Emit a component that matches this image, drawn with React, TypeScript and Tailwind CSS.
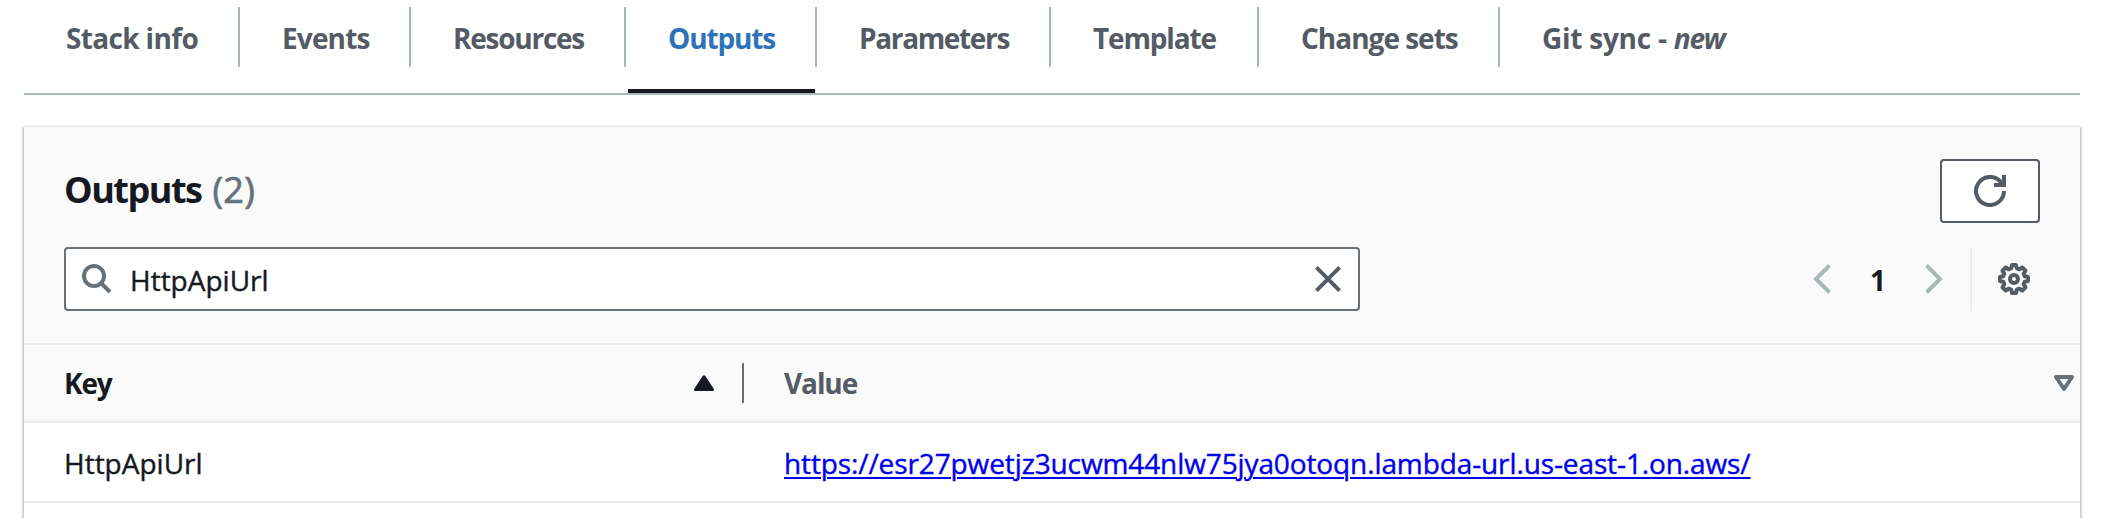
const tabs = [
  { label: "Stack info", cell: "w-[216px] pl-[42px]", text: "tracking-[-0.65px]" },
  { label: "Events", cell: "w-[171px] pl-[42px]", text: "tracking-[-0.85px]" },
  { label: "Resources", cell: "w-[215px] pl-[42px]", text: "tracking-[-1.25px]" },
  { label: "Outputs", cell: "w-[191px] pl-[42px]", text: "tracking-[-1.15px]", active: true },
  { label: "Parameters", cell: "w-[234px] pl-[42px]", text: "tracking-[-1.35px]" },
  { label: "Template", cell: "w-[208px] pl-[42px]", text: "tracking-[-1.15px]" },
  { label: "Change sets", cell: "w-[241px] pl-[42px]", text: "tracking-[-1px]" },
];

function Tabs() {
  return (
    <nav className="flex h-[88px] border-b-2 border-[#aab7b8] font-bold text-[#545b64]">
      {tabs.map((tab) => (
        <a key={tab.label} className={"relative h-[60px] shrink-0 border-r-2 border-[#aab7b8] leading-[62px] " + tab.cell}>
          <span className={(tab.active ? "text-[#2e73b8] " : "") + tab.text}>{tab.label}</span>
          {tab.active && <span className="absolute top-[82px] left-[2px] h-1 w-[187px] bg-[#16191f]" />}
        </a>
      ))}
      <a className="pl-[42px] leading-[62px] tracking-[-0.25px]">
        Git sync - <em className="tracking-[-1.2px]">new</em>
      </a>
    </nav>
  );
}

function SearchIcon() {
  return (
    <svg className="ml-4" width="30" height="30" viewBox="0 0 30 30" fill="none" stroke="#687078" strokeWidth="4">
      <circle cx="12" cy="12" r="10" />
      <path d="M19 19l9 9" />
    </svg>
  );
}

function CloseIcon() {
  return (
    <svg className="mr-[17px]" width="26" height="26" viewBox="0 0 26 26" fill="none" stroke="#545b64" strokeWidth="4">
      <path d="M1.4 1.4l23.2 23.2M24.6 1.4L1.4 24.6" />
    </svg>
  );
}

function RefreshIcon() {
  return (
    <svg width="32" height="32" viewBox="0 0 32 32" fill="none" stroke="#545b64" strokeWidth="4">
      <path d="M30 16a14 14 0 1 1-3-8.700L29 10" />
      <path d="M20 10h10V0" />
    </svg>
  );
}

function Chevron({ right = false }: { right?: boolean }) {
  return (
    <svg width="18" height="30" viewBox="0 0 18 30" fill="none" stroke="#aab7b8" strokeWidth="4">
      <path d={right ? "M1.5 1.5L15 15 1.5 28.5" : "M16.5 1.5L3 15l13.5 13.5"} />
    </svg>
  );
}

function GearIcon() {
  return (
    <svg className="ml-[26px]" width="32" height="32" viewBox="0 0 32 32" fill="none" stroke="#545b64" strokeWidth="4" strokeLinejoin="round">
      <path d="M14 2h4l.8 3.3 2.5 1 3-1.8 3.2 3.2-1.8 3 1 2.5L30 14v4l-3.3.8-1 2.5 1.8 3-3.2 3.2-3-1.8-2.5 1L18 30h-4l-.8-3.3-2.5-1-3 1.8-3.2-3.2 1.8-3-1-2.5L2 18v-4l3.3-.8 1-2.5-1.8-3 3.2-3.2 3 1.8 2.5-1z" />
      <circle cx="16" cy="16" r="4" />
    </svg>
  );
}

function PanelHeader() {
  return (
    <header className="h-[220px] border-y-2 border-[#eaeded] bg-[#fafafa] pt-8 pr-10 pl-10">
      <div className="flex h-16 justify-between">
        <h2 className="text-[36px] leading-[62px]">
          <span className="font-bold tracking-[-1.5px]">Outputs</span>
          <span className="ml-[11px] tracking-[0.3px] text-[#687078] [-webkit-text-stroke:0.7px]">(2)</span>
        </h2>
        <button className="flex w-[100px] items-center justify-center rounded-[4px] border-2 border-[#545b64] bg-white">
          <RefreshIcon />
        </button>
      </div>
      <div className="mt-6 flex h-16 items-center">
        <div className="flex h-16 w-[1296px] items-center rounded-[4px] border-2 border-[#687078] bg-white">
          <SearchIcon />
          <span className="ml-[18px] flex-1 pt-px [-webkit-text-stroke:0.4px]">HttpApiUrl</span>
          <CloseIcon />
        </div>
        <div className="ml-[453px] flex h-16 items-center">
          <Chevron />
          <span className="w-[94px] pt-px text-center font-bold">1</span>
          <Chevron right />
          <span className="ml-[27px] h-16 w-0.5 bg-[#eaeded]" />
          <GearIcon />
        </div>
      </div>
    </header>
  );
}

function OutputsTable() {
  return (
    <div>
      <div className="flex h-[78px] items-center border-b-2 border-[#eaeded] bg-[#fafafa] font-bold leading-[76px]">
        <div className="flex w-[720px] items-center pl-10">
          <span className="flex-1 tracking-[-1.2px]">Key</span>
          <svg className="mr-7" width="20" height="16" viewBox="0 0 20 16" fill="#16191f" stroke="#16191f" strokeWidth="3" strokeLinejoin="round">
            <path d="M10 1.800L1.500 14.500h17z" />
          </svg>
          <span className="h-10 w-0.5 bg-[#687078]" />
        </div>
        <span className="ml-10 flex-1 tracking-[-1.1px] text-[#545b64]">Value</span>
        <svg className="mr-1.5" width="20" height="16" viewBox="0 0 20 16" fill="none" stroke="#687078" strokeWidth="4" strokeLinejoin="round">
          <path d="M2 2h16l-8 12z" />
        </svg>
      </div>
      <div className="flex h-20 border-b-2 border-[#eaeded] pt-px leading-[78px] [-webkit-text-stroke:0.4px]">
        <span className="w-[720px] pl-10">HttpApiUrl</span>
        <a className="ml-10 tracking-[-0.11px] text-[#0000ee] underline decoration-2 underline-offset-[3px]">
          https://esr27pwetjz3ucwm44nlw75jya0otoqn.lambda-url.us-east-1.on.aws/
        </a>
      </div>
    </div>
  );
}

export default function App() {
  return (
    <main className="h-[518px] w-[2108px] overflow-hidden bg-white pt-[7px] pr-7 pl-6 font-['Open_Sans',sans-serif] text-[28px] whitespace-nowrap text-[#16191f]">
      <Tabs />
      <section className="mt-[30px] h-[460px] bg-white shadow-[0_2px_2px_0_rgba(0,28,36,0.3),2px_2px_2px_0_rgba(0,28,36,0.15),-2px_2px_2px_0_rgba(0,28,36,0.15)]">
        <PanelHeader />
        <OutputsTable />
      </section>
    </main>
  );
}
